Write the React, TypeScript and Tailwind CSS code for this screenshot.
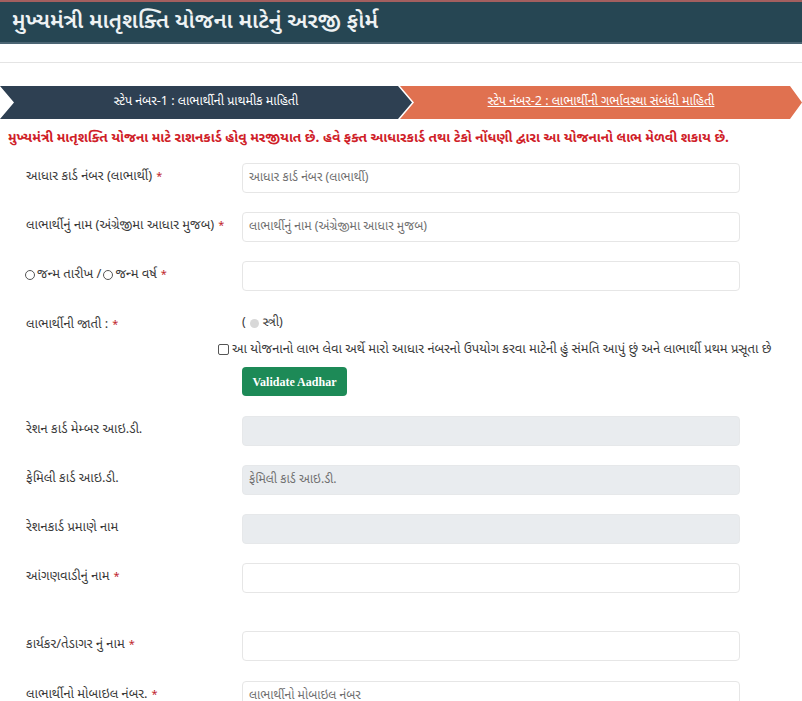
import React from "react"

const font = "[font-family:'Noto_Sans_Gujarati','Noto_Sans','DejaVu_Sans',sans-serif]"

type Field = {
  label: string
  required?: boolean
  placeholder?: string
  disabled?: boolean
  gap?: string
}

function Label({ text, required }: { text: string; required?: boolean }) {
  return (
    <div className="w-[242px] shrink-0 whitespace-nowrap pl-[26px] pt-[4px] text-[13px] text-[#3a3a3a]">
      {text}
      {required && <span className="ml-1 text-[11px] text-[#c0262d]">*</span>}
    </div>
  )
}

function Input({ placeholder, disabled }: { placeholder?: string; disabled?: boolean }) {
  return (
    <div
      className={`flex h-[30px] w-[498px] items-center rounded-[4px] border px-[6px] text-[12.3px] text-[#707070] ${
        disabled ? "border-[#e6e8ea] bg-[#e9ecef]" : "border-[#e6e6e6] bg-white"
      }`}
    >
      {placeholder}
    </div>
  )
}

function Row({ label, required, placeholder, disabled, gap = "mb-[19px]" }: Field) {
  return (
    <div className={`flex items-start ${gap}`}>
      <Label text={label} required={required} />
      <Input placeholder={placeholder} disabled={disabled} />
    </div>
  )
}

export default function App() {
  return (
    <div className={`h-[701px] w-[802px] overflow-hidden bg-white ${font}`}>
      {/* Title bar */}
      <div className="h-[2px] bg-[#a35f5f]" />
      <div className="flex h-[42px] items-center border-b-2 border-[#4b6573] bg-[#264653] pl-[12px]">
        <h1 className="text-[22px] font-semibold text-[#eef2f3]">મુખ્યમંત્રી માતૃશક્તિ યોજના માટેનું અરજી ફોર્મ</h1>
      </div>

      <div className="mt-[18px] border-t border-[#e4e4e4]">
        {/* Steps */}
        <div className="mt-[23px] flex h-[33px]">
          <div className="relative z-10 flex w-[412px] shrink-0 items-center justify-center bg-[#2e4052] px-[14px] text-[12.5px] text-white [clip-path:polygon(0_0,calc(100%-14px)_0,100%_50%,calc(100%-14px)_100%,0_100%,14px_50%)]">
            સ્ટેપ નંબર-1 : લાભાર્થીની પ્રાથમીક માહિતી
          </div>
          <div className="-ml-[12px] flex flex-1 items-center justify-center bg-[#e07150] px-[14px] text-[12.5px] text-white underline [clip-path:polygon(0_0,calc(100%-12px)_0,100%_50%,calc(100%-12px)_100%,0_100%,14px_50%)]">
            સ્ટેપ નંબર-2 : લાભાર્થીની ગર્ભાવસ્થા સંબંધી માહિતી
          </div>
        </div>

        {/* Notice */}
        <p className="mt-[10px] whitespace-nowrap pl-[8px] text-[13.6px] font-bold text-[#cf2027]">
          મુખ્યમંત્રી માતૃશક્તિ યોજના માટે રાશનકાર્ડ હોવુ મરજીયાત છે. હવે ફક્ત આધારકાર્ડ તથા ટેકો નોંધણી દ્વારા આ યોજનાનો લાભ મેળવી શકાય છે.
        </p>

        {/* Form */}
        <div className="mt-[14px]">
          <Row label="આધાર કાર્ડ નંબર (લાભાર્થી)" required placeholder="આધાર કાર્ડ નંબર (લાભાર્થી)" />
          <Row label="લાભાર્થીનું નામ (અંગ્રેજીમા આધાર મુજબ)" required placeholder="લાભાર્થીનું નામ (અંગ્રેજીમા આધાર મુજબ)" />

          <div className="mb-[20px] flex items-start">
            <div className="flex w-[242px] shrink-0 items-center whitespace-nowrap pl-[25px] pt-[4px] text-[13px] text-[#3a3a3a]">
              <span className="inline-block h-[10px] w-[10px] rounded-full border border-[#555]" />
              <span className="ml-[2px]">જન્મ તારીખ /</span>
              <span className="ml-[2px] inline-block h-[10px] w-[10px] rounded-full border border-[#555]" />
              <span className="ml-[2px]">જન્મ વર્ષ</span>
              <span className="ml-1 text-[11px] text-[#c0262d]">*</span>
            </div>
            <Input />
          </div>

          {/* Gender */}
          <div className="flex items-start">
            <Label text="લાભાર્થીની જાતી :" required />
            <div className="flex items-center pt-[3px] text-[12.5px] text-[#3a3a3a]">
              (
              <span className="mx-[4px] inline-block h-[9px] w-[9px] rounded-full bg-[#d8d8d8]" />
              સ્ત્રી)
            </div>
          </div>

          <div className="mt-[5px] flex items-center whitespace-nowrap pl-[218px] text-[13px] text-[#3a3a3a]">
            <span className="mr-[3px] inline-block h-[11px] w-[11px] shrink-0 rounded-[2px] border border-[#555]" />
            આ યોજનાનો લાભ લેવા અર્થે મારો આધાર નંબરનો ઉપયોગ કરવા માટેની હું સંમતિ આપું છું અને લાભાર્થી પ્રથમ પ્રસૂતા છે
          </div>

          <div className="mt-[8px] pl-[242px]">
            <button className="h-[29px] w-[105px] rounded-[4px] bg-[#1d8a57] text-[12px] font-bold text-white [font-family:'Liberation_Serif',serif]">
              Validate Aadhar
            </button>
          </div>

          <div className="mt-[20px]">
            <Row label="રેશન કાર્ડ મેમ્બર આઇ.ડી." disabled />
            <Row label="ફેમિલી કાર્ડ આઇ.ડી." disabled placeholder="ફેમિલી કાર્ડ આઇ.ડી." />
            <Row label="રેશનકાર્ડ પ્રમાણે નામ" disabled />
            <Row label="આંગણવાડીનું નામ" required gap="mb-[38px]" />
            <Row label="કાર્યકર/તેડાગર નું નામ" required gap="mb-[20px]" />
            <Row label="લાભાર્થીનો મોબાઇલ નંબર." required placeholder="લાભાર્થીનો મોબાઇલ નંબર" />
          </div>
        </div>
      </div>
    </div>
  )
}
